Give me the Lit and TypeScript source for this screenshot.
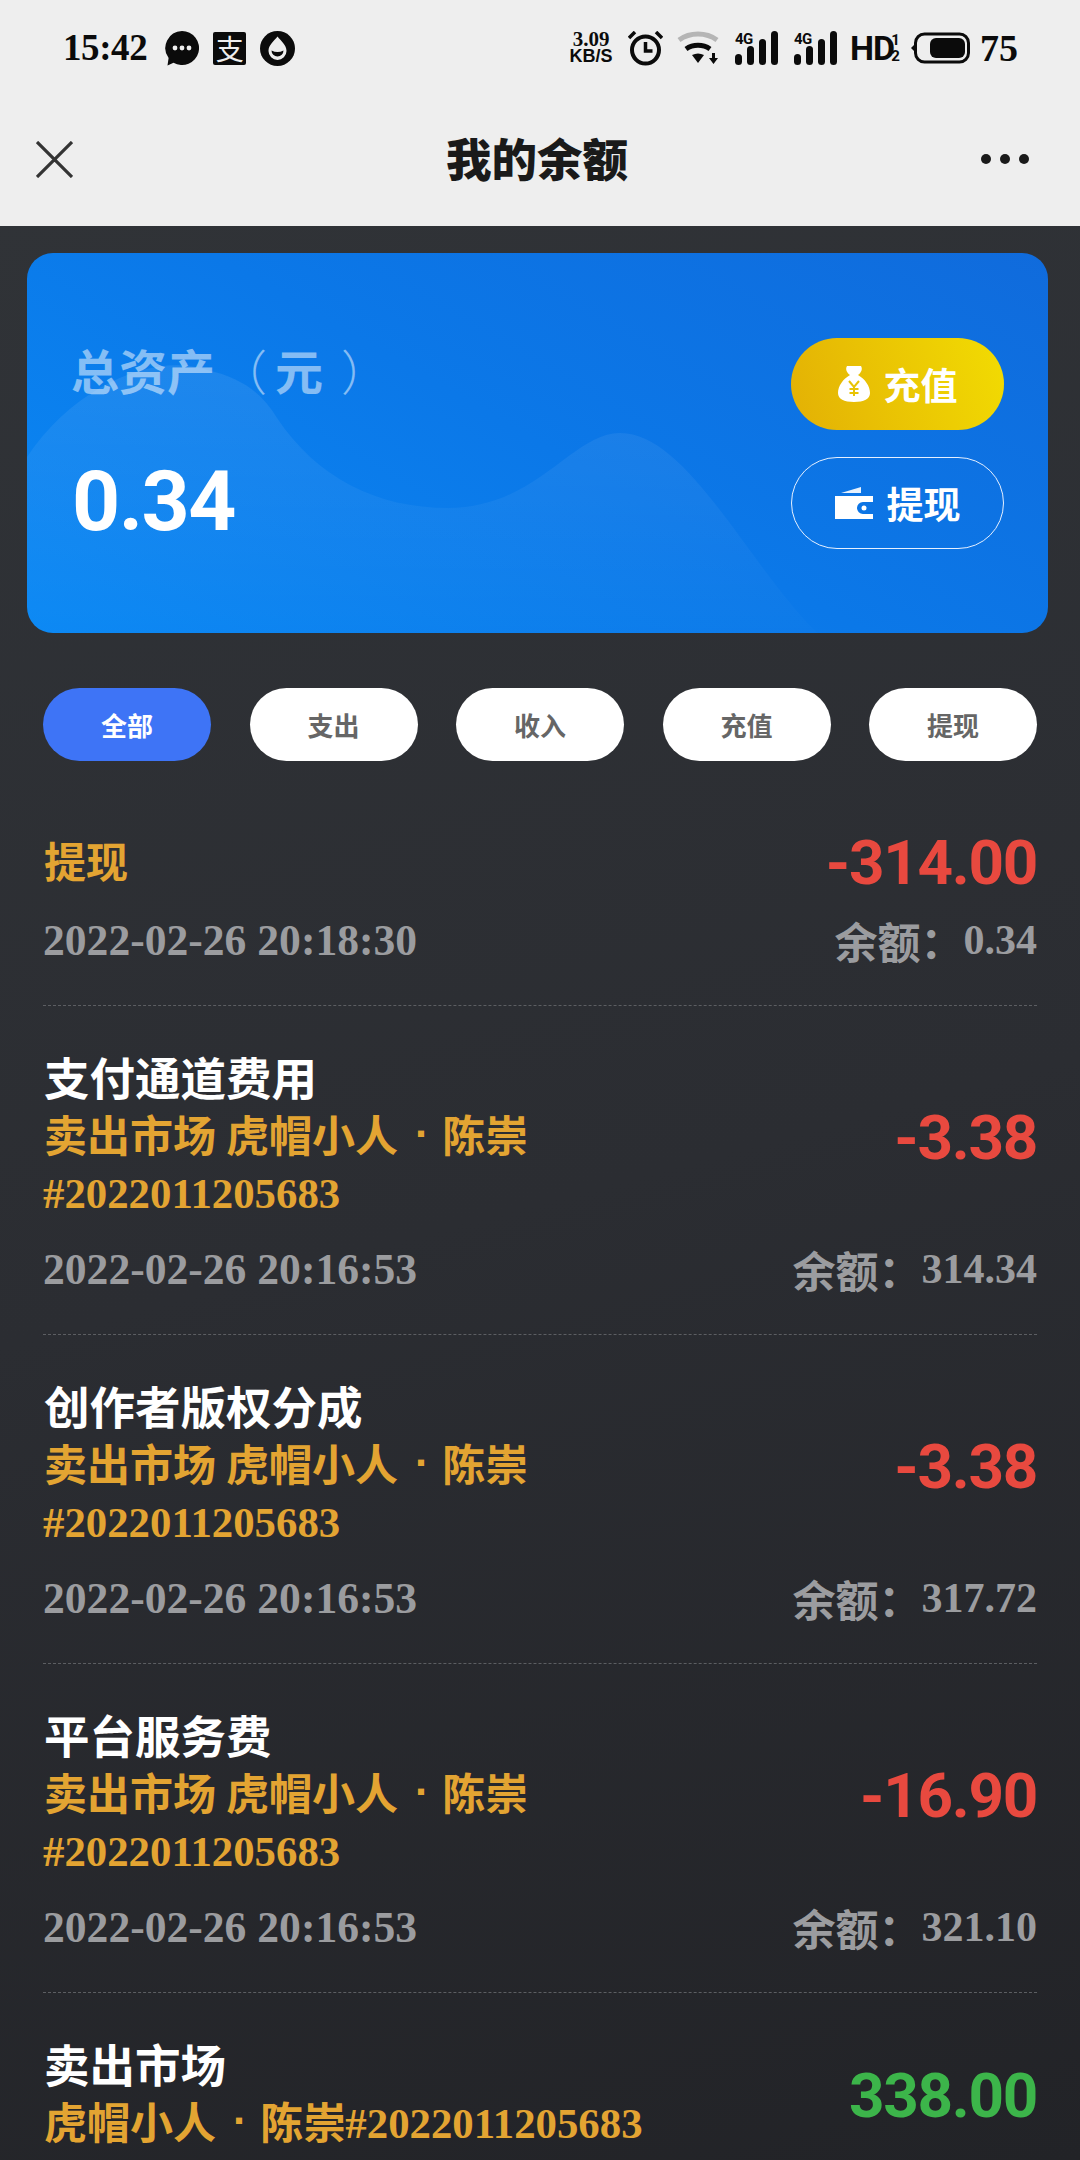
import { LitElement, html, css, svg } from "lit";
import { customElement } from "lit/decorators.js";

interface Row {
  title: string;
  gold?: boolean;
  lines?: number;
  single?: boolean;
  amount: string;
  green?: boolean;
  date?: string;
  balance?: string;
}

const NUM = "#2022011205683";
const ROWS: Row[] = [
  { title: "提现", gold: true, amount: "-314.00", date: "2022-02-26 20:18:30", balance: "0.34" },
  { title: "支付通道费用", lines: 2, amount: "-3.38", date: "2022-02-26 20:16:53", balance: "314.34" },
  { title: "创作者版权分成", lines: 2, amount: "-3.38", date: "2022-02-26 20:16:53", balance: "317.72" },
  { title: "平台服务费", lines: 2, amount: "-16.90", date: "2022-02-26 20:16:53", balance: "321.10" },
  { title: "卖出市场", single: true, amount: "338.00", green: true },
];
const TABS = ["全部", "支出", "收入", "充值", "提现"];

const signal = () => html`<span class="sig"><span class="g4">4G</span><svg width="43" height="34" viewBox="0 0 43 34">
  <g fill="#0b0b0b"><rect x="0" y="23" width="7" height="11" rx="3.5"/><rect x="12" y="15" width="7" height="19" rx="3.5"/><rect x="24" y="8" width="7" height="26" rx="3.5"/><rect x="36" y="0" width="7" height="34" rx="3.5"/></g></svg></span>`;

@customElement("app-root")
export class AppRoot extends LitElement {
  static styles = css`
    :host { display: block; width: 1080px; height: 2160px; overflow: hidden; background: linear-gradient(165deg, #313438 0%, #2b2d32 55%, #222327 100%); font-family: "Noto Sans CJK SC", "Noto Sans", sans-serif; }
    .top { background: #eeeeee; height: 226px; display: flex; flex-direction: column; }
    .status { height: 98px; box-sizing: border-box; padding: 31px 62px 0 63px; display: flex; justify-content: space-between; align-items: flex-start; color: #0b0b0b; }
    .sl, .sr { display: flex; align-items: center; height: 34px; }
    .sl { gap: 14px; }
    .serif { font-family: "Liberation Serif", serif; font-weight: 700; }
    .time { font-size: 37px; margin-right: 4px; line-height: 34px; letter-spacing: -.4px; }
    .ali { width: 33px; height: 33px; background: #0b0b0b; color: #eee; font-size: 28px; font-weight: 400; line-height: 33px; text-align: center; border-radius: 2px; }
    .speed { width: 46px; display: flex; flex-direction: column; align-items: center; line-height: 17px; margin-right: 14px; }
    .speed b { font-family: "Liberation Serif", serif; font-size: 21px; line-height: 17px; }
    .speed i { font-family: "Liberation Sans", sans-serif; font-style: normal; font-weight: 700; font-size: 18px; line-height: 17px; }
    .clock { margin-right: 14px; }
    .wifi { margin-right: 16px; }
    .sig { position: relative; width: 43px; height: 34px; display: block; }
    .sig + .sig { margin-left: 16px; }
    .sig svg { display: block; }
    .g4 { position: absolute; left: 0; top: 0; font: 700 15px/16px "Roboto", sans-serif; letter-spacing: -.5px; }
    .hd { width: 39px; font: 700 34px/34px "Liberation Sans Narrow", "Roboto", sans-serif; letter-spacing: -1px; margin-left: 13px; }
    .half { width: 13px; display: flex; flex-direction: column; font: 700 15px/16px "Roboto", sans-serif; margin-right: 9px; align-items: center; }
    .pct { font-size: 38px; line-height: 34px; margin-left: 10px; }
    .nav { flex: 1; display: flex; align-items: center; justify-content: space-between; padding: 0 51px 6px 36px; position: relative; }
    .nav h1 { position: absolute; left: 0; right: 6px; top: 0; bottom: 10px; margin: 0; display: flex; align-items: center; justify-content: center; font-size: 45.500px; font-weight: 900; color: #1a1a1a; }
    .card { margin: 27px 32px 0 27px; height: 380px; border-radius: 26px; position: relative; overflow: hidden; background: linear-gradient(30deg, #0a88f4 0%, #0b78e8 50%, #106bdc 100%); display: flex; justify-content: space-between; align-items: center; padding: 0 44px 0 44px; box-sizing: border-box; width: 1021px; }
    .wave { position: absolute; left: 0; top: 0; }
    .cl, .cr { position: relative; display: flex; flex-direction: column; }
    .cl { gap: 58px; }
    .label { font-size: 48px; line-height: 60px; font-weight: 700; color: rgba(255,255,255,.5); display: flex; margin-top: -1px; }
    .p1 { font-weight: 300; margin: 0 8px 0 4px; }
    .p2 { font-weight: 300; margin-left: 18px; }
    .total { font: 700 84px/90px "Roboto", sans-serif; color: #fff; letter-spacing: -1.5px; padding-left: 1px; }
    .cr { gap: 27px; }
    .btn { width: 213px; height: 92px; box-sizing: border-box; border-radius: 46px; display: flex; align-items: center; justify-content: center; gap: 14px; color: #fff; font-size: 37px; font-weight: 700; }
    .gold { background: linear-gradient(70deg, #e3b005 0%, #f2dc02 100%); }
    .line { border: 1.5px solid #e6f0ff; }
    .tabs { display: flex; justify-content: space-between; padding: 55px 43px 25px; }
    .tab { width: 168px; height: 73px; border-radius: 37px; background: #fff; color: #666; display: flex; align-items: center; justify-content: center; font-size: 26px; font-weight: 700; }
    .tab.on { background: #3e74f6; color: #fff; }
    .row { margin: 0 43px; padding: 46px 0 42px; border-bottom: 1px dashed #5c5e62; }
    .row:last-child { border-bottom: 0; }
    .head { display: flex; justify-content: space-between; align-items: center; }
    .text { min-height: 62px; display: flex; flex-direction: column; justify-content: center; margin: -4px 0 4px 1px; }
    .title { font-size: 45.500px; line-height: 57px; height: 57px; font-weight: 700; color: #fff; }
    .title.g { font-size: 42px; color: #e3a432; }
    .sub { font-size: 43px; line-height: 57px; height: 57px; font-weight: 700; color: #e3a432; white-space: nowrap; display: flex; }
    .sub .sp { width: 10px; }
    .dot { font-family: "Liberation Sans", sans-serif; margin: 0 13px 0 17px; }
    .num { font: 700 42.800px/63px "Liberation Serif", serif; margin-left: -1px; }
    .amt { font: 700 62px/62px "Roboto", sans-serif; color: #e8493f; letter-spacing: -1.3px; }
    .amt.up { color: #3cb54a; }
    .foot { margin-top: 23px; display: flex; justify-content: space-between; align-items: center; height: 46px; color: #9b9c9f; }
    .date { font: 700 43.600px/46px "Liberation Serif", serif; }
    .bal { font-size: 43px; font-weight: 700; display: flex; align-items: center; line-height: 46px; }
    .bal b { font: 700 42px/46px "Liberation Serif", serif; }
  `;

  private who() {
    return html`<span>虎帽小人</span><span class="dot">·</span><span>陈崇</span>`;
  }

  render() {
    return html`
      <div class="top">
        <div class="status">
          <div class="sl">
            <span class="serif time">15:42</span>
            <svg width="34" height="35" viewBox="0 0 34 35"><path fill="#0b0b0b" d="M17 0a17 17 0 1 1-8.500 31.700L2.500 34.500 3.600 27A17 17 0 0 1 17 0z"/><g fill="#eee"><circle cx="10" cy="17" r="2.400"/><circle cx="17" cy="17" r="2.400"/><circle cx="24" cy="17" r="2.400"/></g></svg>
            <span class="ali">支</span>
            <svg width="35" height="35" viewBox="0 0 35 35"><circle cx="17.500" cy="17.500" r="17.500" fill="#0b0b0b"/><path fill="#eee" d="M17.500 5.500C21 10 26.500 14 26.500 20a9 9 0 0 1-18 0c0-6 5.500-10 9-14.500z"/><path fill="#0b0b0b" d="M11.500 19.500c4 2 8 2 12 0a6 6 0 0 1-12 0z"/></svg>
          </div>
          <div class="sr">
            <span class="speed"><b>3.09</b><i>KB/S</i></span>
            <svg class="clock" width="35" height="35" viewBox="0 0 35 35"><circle cx="17.500" cy="19" r="13.500" fill="none" stroke="#0b0b0b" stroke-width="4"/><path d="M17.500 11v9h7" fill="none" stroke="#0b0b0b" stroke-width="3.500"/><path d="M1 7l6-6M34 7l-6-6" stroke="#0b0b0b" stroke-width="3.500"/></svg>
            <svg class="wifi" width="42" height="34" viewBox="0 0 42 34"><path d="M2 9c11-8 27-8 38 0" fill="none" stroke="#b5b5b5" stroke-width="5"/><path d="M9 18c7-5 17-5 24 0" fill="none" stroke="#0b0b0b" stroke-width="5"/><path fill="#0b0b0b" d="M15 24c4-2 8-2 12 0l-6 8z"/><path fill="#0b0b0b" d="M35 22h3v5h3l-4.500 6-4.500-6h3z"/></svg>
            ${signal()}
            ${signal()}
            <span class="hd">HD</span>
            <span class="half"><span>1</span><span>2</span></span>
            <svg width="59" height="34" viewBox="0 0 59 34"><path fill="#0b0b0b" d="M0 17l4-4v8z"/><rect x="4.500" y="3" width="53" height="28" rx="9" fill="none" stroke="#0b0b0b" stroke-width="3"/><rect x="19" y="7" width="35" height="20" rx="6" fill="#0b0b0b"/></svg>
            <span class="serif pct">75</span>
          </div>
        </div>
        <div class="nav">
          <svg width="37" height="37" viewBox="0 0 37 37"><path d="M1 1l35 35M36 1L1 36" stroke="#333" stroke-width="3.200" fill="none"/></svg>
          <h1>我的余额</h1>
          <svg width="48" height="10" viewBox="0 0 48 10"><g fill="#1a1a1a"><circle cx="5" cy="5" r="5"/><circle cx="24" cy="5" r="5"/><circle cx="43" cy="5" r="5"/></g></svg>
        </div>
      </div>

      <div class="card">
        <svg class="wave" width="1021" height="380" viewBox="0 0 1021 380">
          <defs><linearGradient id="wv" x1="0" y1="0" x2="0" y2="1"><stop offset="0" stop-color="#fff" stop-opacity=".08"/><stop offset="1" stop-color="#fff" stop-opacity=".01"/></linearGradient></defs>
          ${svg`<path fill="url(#wv)" d="M0 204C50 130 130 100 180 117C215 125 235 140 250 165C290 225 350 255 421 255C510 255 545 180 593 180C660 180 720 310 790 380L0 380Z"/>`}
        </svg>
        <div class="cl">
          <div class="label"><span>总资产</span><span class="p1">（</span><span>元</span><span class="p2">）</span></div>
          <div class="total">0.34</div>
        </div>
        <div class="cr">
          <div class="btn gold">
            <svg width="32" height="36" viewBox="0 0 32 36"><path fill="#fff" d="M9 0h14c2 3 0 7-3 9C27 13 32 20 32 27c0 6-6 9-16 9S0 33 0 27C0 20 5 13 12 9 9 7 7 3 9 0z"/><path d="M11 15l5 6 5-6M16 21v9M11.500 23h9M11.500 27h9" fill="none" stroke="#e8c404" stroke-width="2"/></svg>
            <span>充值</span>
          </div>
          <div class="btn line">
            <svg width="38" height="32" viewBox="0 0 38 32"><path fill="#fff" opacity=".9" d="M6 6L26 0v6z"/><path fill="#fff" d="M0 9h38v6H28a6 6 0 0 0 0 12h10v5H0z"/><circle cx="29" cy="21" r="2.500" fill="#fff"/></svg>
            <span>提现</span>
          </div>
        </div>
      </div>

      <div class="tabs">
        ${TABS.map((t, i) => html`<div class="tab ${i === 0 ? "on" : ""}">${t}</div>`)}
      </div>

      ${ROWS.map((r) => html`
        <div class="row">
          <div class="head">
            <div class="text">
              <div class="title ${r.gold ? "g" : ""}">${r.title}</div>
              ${r.lines ? html`
                <div class="sub"><span>卖出市场</span><span class="sp"></span>${this.who()}</div>
                <div class="sub"><span class="num">${NUM}</span></div>` : ""}
              ${r.single ? html`<div class="sub">${this.who()}<span class="num">${NUM}</span></div>` : ""}
            </div>
            <div class="amt ${r.green ? "up" : ""}">${r.amount}</div>
          </div>
          ${r.date ? html`<div class="foot"><span class="date">${r.date}</span><span class="bal">余额：<b>${r.balance}</b></span></div>` : ""}
        </div>
      `)}
    `;
  }
}
